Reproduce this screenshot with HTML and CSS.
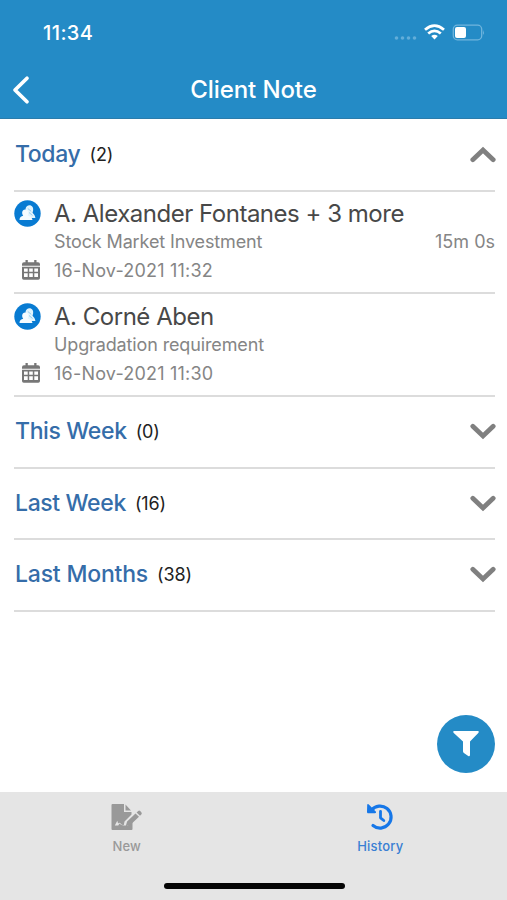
FILE: index.html
```html
<!DOCTYPE html>
<html lang="en">
<head>
<meta charset="utf-8">
<title>Client Note</title>
<link rel="stylesheet" href="styles.css">
</head>
<body>
<svg class="defs" aria-hidden="true">
  <symbol id="chevron" viewBox="0 0 26 17"><path d="M2.800 3.300 13 13 23.200 3.300" fill="none" stroke="currentColor" stroke-width="4.800" stroke-linecap="round"/></symbol>
  <symbol id="people" viewBox="0 0 27 27"><circle cx="13.500" cy="13.500" r="13.200" fill="#087bd2"/><path d="M11.500 9c.3-3 3.500-4.500 5.700-3.200 2.400 1.300 2.400 4.500 1.300 6.800.5 1.500 2.700 2.300 2.900 5.400h-8z" fill="#e2f4fd"/><path d="M5.500 20c-.1-2.700 1.700-3.500 3.700-4.200-1.200-1.500-1.500-4-.3-5.300 1.500-1.800 4.500-1.200 5.200.7.600 1.600 0 3.200-.6 4.300 1.800.6 4.500 1.500 5 4.500z" fill="#f4fbff"/><path d="m13.800 8.500 3.400 2.800m-2.200 1.200 3.500 3" stroke="#75bdea" stroke-width=".7"/></symbol>
  <symbol id="calendar" viewBox="0 0 18 20"><path fill="currentColor" fill-rule="evenodd" d="M3.500 0h2.300v2.200h6.400V0h2.300v2.200H16q2 0 2 2v1.600H0V4.200q0-2 2-2h1.500zM0 6.800h18v11.200q0 1.700-1.700 1.700H1.700Q0 19.700 0 18zm2 1.700v3.300h3.700V8.500zm5.200 0v3.300h3.600V8.500zm5.100 0v3.300H16V8.500zM2 13.300v3.600h3.700v-3.600zm5.200 0v3.600h3.600v-3.600zm5.100 0v3.600H16v-3.600z"/></symbol>
</svg>
<div class="screen">
  <header class="header">
    <div class="status">
      <span class="clock">11:34</span>
      <svg class="signals" width="92" height="20" viewBox="0 0 92 20">
        <g fill="#62add9"><circle cx="3.500" cy="15" r="1.800"/><circle cx="9.500" cy="15" r="1.800"/><circle cx="15.500" cy="15" r="1.800"/><circle cx="21.500" cy="15" r="1.800"/></g>
        <g fill="none" stroke="#fff" stroke-width="2.800"><path d="M32 6.700Q41.500-1.500 51 6.700"/><path d="M35.200 10.500Q41.500 5.200 47.800 10.500"/></g><path d="M38.200 13Q41.500 10.500 44.800 13L41.500 16.500z" fill="#fff"/>
        <rect x="60.300" y="2.200" width="28.400" height="14.600" rx="4" fill="none" stroke="#70b5dd" stroke-width="1.300"/><rect x="62" y="4" width="11" height="11" rx="2" fill="#fff"/><path d="M90 7q1.800 2.500 0 5z" fill="#70b5dd"/>
      </svg>
    </div>
    <div class="nav">
      <svg class="back" width="20" height="30" viewBox="0 0 20 30"><path d="M16 3.200 4 15l12 11.700" fill="none" stroke="#fff" stroke-width="3.700" stroke-linecap="round" stroke-linejoin="round"/></svg>
      <h1 class="title">Client Note</h1>
    </div>
  </header>
  <main class="list">
    <section class="group today"><h2 class="name">Today</h2><span class="count">(2)</span><svg class="chevron up"><use href="#chevron"/></svg></section>
    <article class="note first">
      <svg class="avatar"><use href="#people"/></svg><h3 class="client">A. Alexander Fontanes + 3 more</h3>
      <div class="line subject"><span>Stock Market Investment</span><span class="duration">15m 0s</span></div>
      <svg class="calendar"><use href="#calendar"/></svg><time class="line date">16-Nov-2021 11:32</time>
    </article>
    <article class="note">
      <svg class="avatar"><use href="#people"/></svg><h3 class="client">A. Corné Aben</h3>
      <div class="line subject"><span>Upgradation requirement</span></div>
      <svg class="calendar"><use href="#calendar"/></svg><time class="line date">16-Nov-2021 11:30</time>
    </article>
    <section class="group"><h2 class="name">This Week</h2><span class="count">(0)</span><svg class="chevron"><use href="#chevron"/></svg></section>
    <section class="group short"><h2 class="name">Last Week</h2><span class="count">(16)</span><svg class="chevron"><use href="#chevron"/></svg></section>
    <section class="group"><h2 class="name months">Last Months</h2><span class="count">(38)</span><svg class="chevron"><use href="#chevron"/></svg></section>
  </main>
  <button class="filter" aria-label="Filter"><svg width="28" height="28" viewBox="0 0 28 28"><path d="M2 1h24q1.400.3.500 1.700L18 11.500V25q-.2 1.800-1.800 1l-4.300-3q-.9-.7-.9-1.700v-9.800L1.500 2.700Q.600 1.300 2 1z" fill="#fff"/></svg></button>
  <footer class="tabs">
    <div class="tab">
      <svg width="32" height="28" viewBox="0 0 32 28"><path d="M1.500 1H13v8h7.500v2.500l-7 7-.7 3.500q-2 .3-3.200-1.600-1.500-1.300-2.500.2l-.8-2.800-2.500 4.600h3.500l1.100-2q1.800 2 4.500 2h4l4.600-4V26q0 1-1 1h-19Q.5 27 .5 26V2q0-1 1-1z" fill="#999"/><path d="M14.500 1.500 20 7.500h-5.500zM24.500 10.500l3.500 3.300-8.500 8-4.800 1.500 1.400-4.700zM25.600 9.500l1.600-1.500q1-.8 2 0l1.300 1.500q.7 1-.2 1.900l-1.300 1.300z" fill="#999"/></svg>
      <span class="label">New</span>
    </div>
    <div class="tab active">
      <svg width="28" height="28" viewBox="0 0 28 28"><path d="M5.500 7.200A11 11 0 1 1 7 22.500" fill="none" stroke="#1677e8" stroke-width="3.200" stroke-linecap="round"/><path d="M1.200 1.500q.8-.8 1.600 0L10 8.700q.5 1.300-1 1.500H1.700Q1 10 1 9z" fill="#1677e8"/><path d="M14.500 8.300v6.500l3.300 2.700" fill="none" stroke="#1677e8" stroke-width="2.800" stroke-linecap="round" stroke-linejoin="round"/></svg>
      <span class="label">History</span>
    </div>
    <div class="home"></div>
  </footer>
</div>
</body>
</html>
```
FILE: styles.css
```css
* { box-sizing: border-box; }
body { margin: 0; background: #fff; font-family: Inter, "Liberation Sans", sans-serif; }
h1, h2, h3 { margin: 0; }
svg { display: block; flex: none; }
.defs { position: absolute; width: 0; height: 0; }
.screen { position: relative; width: 507px; height: 900px; display: flex; flex-direction: column; overflow: hidden; }
.header { height: 119px; background: #248bc6; border-bottom: 1px solid #2b7cab; color: #fff; }
.status { height: 60px; padding: 23px 22px 0 43px; display: flex; justify-content: space-between; align-items: flex-start; }
.clock { font-size: 20px; line-height: 20px; font-weight: 550; letter-spacing: .4px; }
.nav { height: 60px; display: grid; grid-template-columns: 60px 1fr 60px; align-items: center; }
.back { margin-left: 11px; }
.title { text-align: center; font-size: 24px; line-height: 30px; font-weight: 550; letter-spacing: -.1px; }
.list { padding: 0 12px 0 14px; }
.group { height: 72px; border-bottom: 2px solid #dcdcdc; display: flex; align-items: baseline; padding: 19px 0 0 1px; }
.today { height: 73px; padding-top: 20px; }
.short { height: 71px; }
.name { color: #356da9; font-size: 23px; line-height: 30px; font-weight: 550; letter-spacing: -.37px; }
.months { letter-spacing: -.2px; }
.count { position: relative; top: -1px; margin-left: 9px; font-size: 18px; line-height: 24px; color: #222; letter-spacing: -.1px; }
.chevron { width: 26px; height: 17px; margin-left: auto; margin-right: -1px; align-self: flex-start; margin-top: 7px; color: #808080; }
.up { transform: rotate(180deg); }
.note { height: 103px; border-bottom: 2px solid #dcdcdc; padding-top: 8px; display: grid; grid-template-columns: 40px 1fr; grid-template-rows: 30px 26px 32px; align-items: center; }
.note.first { height: 102px; padding-top: 7px; }
.avatar { width: 27px; height: 27px; margin-top: -2px; }
.client { font-size: 24px; line-height: 30px; font-weight: 400; color: #484848; white-space: nowrap; letter-spacing: -.48px; }
.line { font-size: 18px; line-height: 24px; color: #858585; letter-spacing: -.13px; }
.duration { letter-spacing: 0; }
.date { letter-spacing: .21px; }
.subject { grid-column: 2; display: flex; justify-content: space-between; }
.calendar { width: 18px; height: 20px; margin-left: 8px; margin-top: -2px; color: #777; }
.filter { position: absolute; left: 437px; top: 715px; width: 58px; height: 58px; border: 0; border-radius: 50%; padding: 0; background: #248bc6; display: grid; place-items: center; }
.tabs { height: 108px; margin-top: auto; background: #e5e5e5; display: grid; grid-template-columns: 1fr 1fr; position: relative; }
.tab { display: flex; flex-direction: column; align-items: center; padding-top: 11px; color: #999; }
.active { color: #397fd3; }
.label { font-size: 13px; line-height: 18px; margin-top: 6px; font-weight: 500; letter-spacing: .2px; }
.home { position: absolute; left: 164px; bottom: 11px; width: 181px; height: 6px; border-radius: 3px; background: #050505; }
```
